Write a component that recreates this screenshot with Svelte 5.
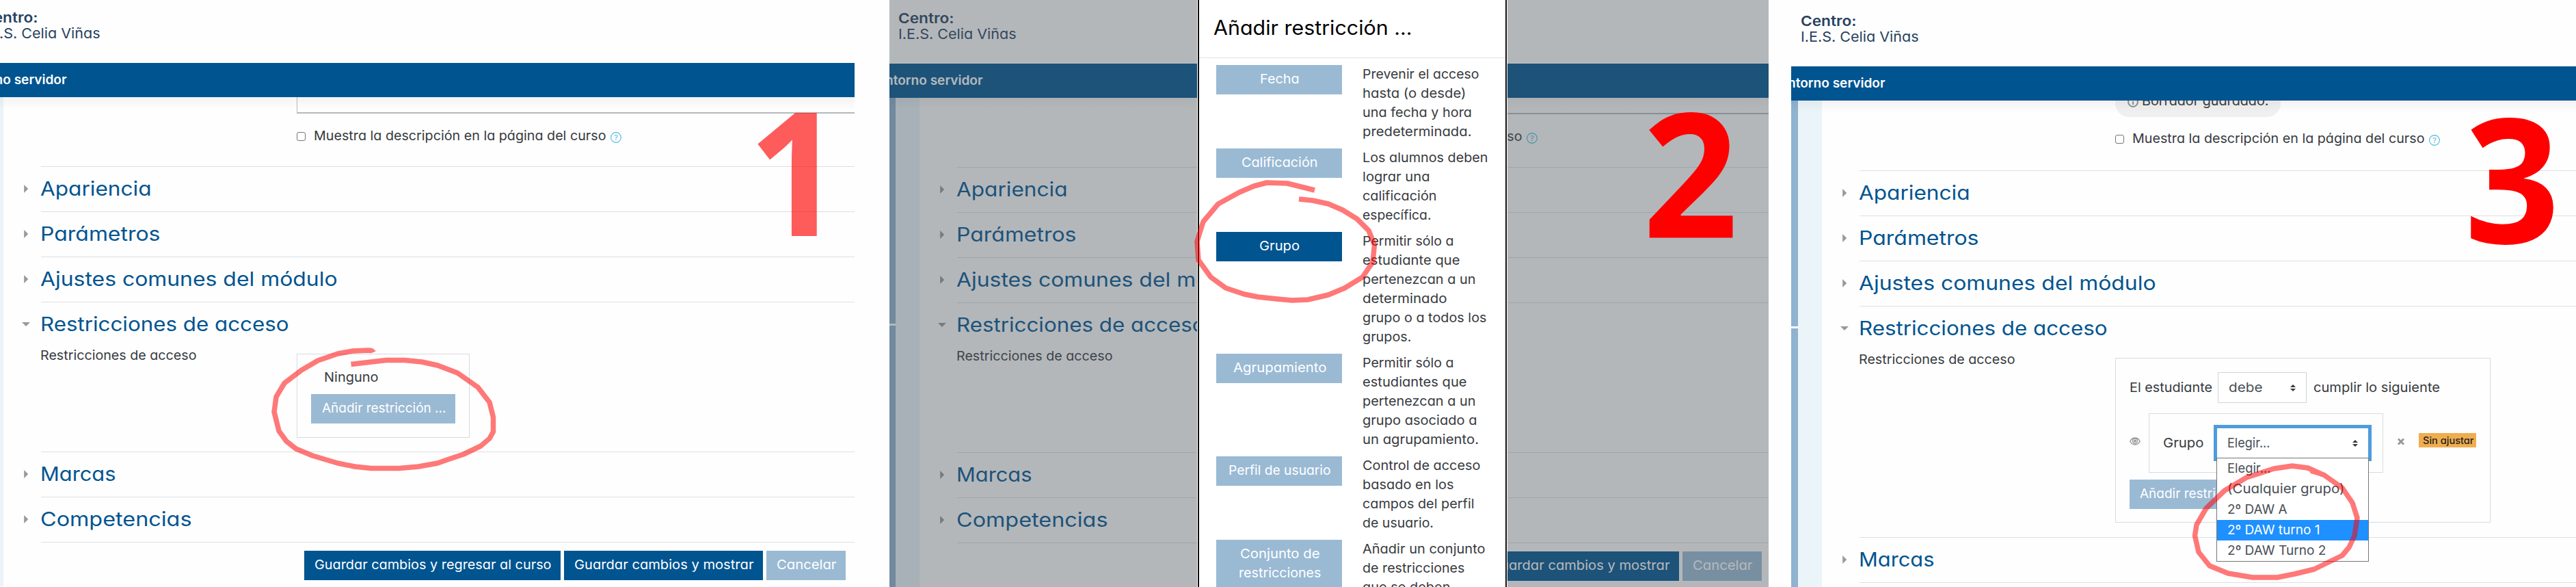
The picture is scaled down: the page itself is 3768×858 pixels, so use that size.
<script>
  const sections = {
    before: [
      ['Apariencia', 161],
      ['Parámetros', 174],
      ['Ajustes comunes del módulo', 433]
    ],
    after: [
      ['Marcas', 109],
      ['Competencias', 220]
    ]
  };

  const restrictions = [
    { name: [['Fecha', 56]], text: [['Prevenir el acceso', 169], ['hasta (o desde)', 150], ['una fecha y hora', 158.5], ['predeterminada.', 158]] },
    { name: [['Calificación', 110]], text: [['Los alumnos deben', 182], ['lograr una', 97], ['calificación', 107], ['específica.', 99]] },
    { name: [['Grupo', 57.5]], active: true, text: [['Permitir sólo a', 132], ['estudiante que', 141], ['pertenezcan a un', 164], ['determinado', 122], ['grupo o a todos los', 180], ['grupos.', 70]] },
    { name: [['Agrupamiento', 135]], text: [['Permitir sólo a', 132], ['estudiantes que', 151], ['pertenezcan a un', 164], ['grupo asociado a', 166], ['un agrupamiento.', 168.5]] },
    { name: [['Perfil de usuario', 148]], text: [['Control de acceso', 171], ['basado en los', 132], ['campos del perfil', 162], ['de usuario.', 102.5]] },
    { name: [['Conjunto de', 115], ['restricciones', 119]], text: [['Añadir un conjunto', 178], ['de restricciones', 148], ['que se deben', 127]] }
  ];

  const options = [
    ['Elegir...', 62],
    ['(Cualquier grupo)', 170],
    ['2º DAW A', 86],
    ['2º DAW turno 1', 134],
    ['2º DAW Turno 2', 143]
  ];

  // Widens a label's letters so that it occupies the given width.
  function fit(node, width) {
    const natural = node.getBoundingClientRect().width;
    node.style.width = `${width}px`;
    node.style.transform = `scaleX(${((width + 1.5) / natural).toFixed(4)})`;
  }
</script>

{#snippet label(text, width)}<span class="t" use:fit={width}>{text}</span>{/snippet}

{#snippet section(title, width)}
  <section class="section">
    <svg class="caret" viewBox="0 0 12 12"><path d="M3.2 0 9.2 6 3.2 12z" /></svg>
    <div class="body"><h2>{@render label(title, width)}</h2></div>
  </section>
{/snippet}

{#snippet arrows()}
  <svg class="arrows" viewBox="0 0 8 10"><path d="M0 4 4 0 8 4zM0 6 4 10 8 6z" /></svg>
{/snippet}

{#snippet page(kind)}
  <div class="page {kind}">
    <header>
      <strong>{@render label('Centro:', 80)}</strong>
      <div>{@render label('I.E.S. Celia Viñas', 171)}</div>
    </header>
    <nav><div>{@render label('ntorno servidor', 141)}</div></nav>
    <div class="columns">
      <div class="rail"><i></i><i></i></div>
      <div class="pale"></div>
      <main>
        <div class="top">
          {#if kind === 'group'}
            <div class="draft">
              <svg viewBox="0 0 16 16"><circle cx="8" cy="8" r="6.9" /><path d="M8 7v5M8 4v1.6" /></svg>
              {@render label('Borrador guardado.', 184)}
            </div>
          {:else}
            <div class="editor"></div>
          {/if}
          <div class="check">
            <i class="box"></i>
            {@render label('Muestra la descripción en la página del curso', 426)}
            <svg class="help" viewBox="0 0 16 16"><circle cx="8" cy="8" r="7.4" /><text x="8" y="12">?</text></svg>
          </div>
        </div>
        {#each sections.before as [title, width]}{@render section(title, width)}{/each}
        <section class="section open">
          <svg class="caret" viewBox="0 0 12 12"><path d="M0 3h12L6 9z" /></svg>
          <div class="body">
            <h2>{@render label('Restricciones de acceso', 362)}</h2>
            <div class="field">
              <div class="name">{@render label('Restricciones de acceso', 227)}</div>
              {#if kind === 'group'}
                <div class="rules">
                  <div class="sentence">
                    {@render label('El estudiante', 119.5)}
                    <div class="select">{@render label('debe', 48)}{@render arrows()}</div>
                    {@render label('cumplir lo siguiente', 183.5)}
                  </div>
                  <div class="rule">
                    <svg class="eye" viewBox="0 0 16 12"><path d="M.8 6C2.5 2.7 5 1 8 1s5.500 1.700 7.200 5C13.500 9.300 11 11 8 11S2.500 9.300.8 6z" /><circle cx="8" cy="5.500" r="3.500" /><circle class="pupil" cx="8" cy="5.500" r="1.900" /></svg>
                    <div class="condition">
                      {@render label('Grupo', 58)}
                      <div class="select focus">
                        {@render label('Elegir...', 61)}{@render arrows()}
                        <div class="menu">
                          {#each options as [text, width], i}
                            <div class:chosen={i === 3}>{@render label(text, width)}</div>
                          {/each}
                        </div>
                      </div>
                    </div>
                    <svg class="cross" viewBox="0 0 12 11"><path d="M2 1.500 10 9.500M10 1.500 2 9.500" /></svg>
                    <span class="badge">{@render label('Sin ajustar', 73)}</span>
                  </div>
                  <div class="btn light">{@render label('Añadir restricción ...', 180)}</div>
                </div>
              {:else}
                <div class="rules">
                  <div class="none">{@render label('Ninguno', 78)}</div>
                  <div class="btn light">{@render label('Añadir restricción ...', 180)}</div>
                </div>
              {/if}
            </div>
          </div>
        </section>
        {#each sections.after as [title, width]}{@render section(title, width)}{/each}
        <div class="actions">
          <div class="btn">{@render label('Guardar cambios y regresar al curso', 345)}</div>
          <div class="btn">{@render label('Guardar cambios y mostrar', 261)}</div>
          <div class="btn light">{@render label('Cancelar', 86)}</div>
        </div>
      </main>
    </div>
  </div>
{/snippet}

<div class="steps">
  <div class="step first">
    {@render page('empty')}
    <div class="clip"><span class="digit">1</span></div>
  </div>
  <div class="step second">
    {@render page('dimmed')}
    <div class="shade"></div>
    <div class="modal">
      <div class="title">{@render label('Añadir restricción ...', 289)}</div>
      <div class="list">
        {#each restrictions as item}
          <div class="item">
            <div class="btn" class:light={!item.active}>
              {#each item.name as [text, width]}<div>{@render label(text, width)}</div>{/each}
            </div>
            <div class="desc">
              {#each item.text as [text, width]}<div>{@render label(text, width)}</div>{/each}
            </div>
          </div>
        {/each}
      </div>
    </div>
    <span class="digit">2</span>
  </div>
  <div class="step third">
    {@render page('group')}
    <span class="digit">3</span>
  </div>
  <svg class="marks" viewBox="0 0 3768 858">
    <path d="M546 515Q545 512 539 512L516 513 494 517 465 527 441 541 416 560 404 580 401 602 408 630 419 645 433 656 457 666 494 677 519 682 543 684.500 584 684.500 612 682 640 677 657 671 678 664 703 652 716 641 721.500 631 721.500 610 716 588 699 566 669 545 640 534 617 529 592 526.500 565 526.500 543 529 513.500 532.500" />
    <path d="M1923 278 1907 274 1883 268 1853 267 1834 272 1813 281 1782 298 1760 324 1751 353 1753 380 1771 405 1793 421 1820 430 1840 434 1868 437 1890 439 1913 438 1943 431 1967 421 1993 405 2008 383 2010.500 358 2002 337 1985 320 1964 307 1943 298 1920 293 1900 291" />
    <path d="M3398 694 3376 684 3353 681 3326 685 3286 698 3254 717 3227 743 3213 767 3210.500 783 3216 807 3232 827 3259 838 3295 844 3331 844 3356 839 3385 832 3426 812 3436 800 3444 783 3448 757 3441 735 3426 713 3399 694 3380 688" />
  </svg>
</div>

<style>
  :global(body) { margin: 0; background: #fefefe; }
  .steps {
    position: relative; display: flex; width: 3768px; height: 858px; overflow: hidden;
    background: #fefefe; color: #373b40;
    font: 19px/28px Inter, "Open Sans", sans-serif;
    font-feature-settings: "cv11";
  }
  .t { display: inline-block; white-space: pre; flex: none; text-align: left; transform-origin: 0 50%; }
  .step { position: relative; flex: none; height: 858px; overflow: hidden; }
  .first { width: 1250px; margin-right: 51px; }
  .second { width: 1286px; margin-right: 33px; }
  .third { width: 1148px; }
  .page { box-sizing: border-box; }
  .empty { width: 1290px; margin-left: -40px; }
  .dimmed { width: 1287px; margin-left: -1px; padding-top: 1px; }
  .group { width: 1148px; padding-top: 5px; }

  header { box-sizing: border-box; height: 92px; padding: 14px 0 0 14px; color: #27415f; font-size: 20.500px; line-height: 23px; }
  header strong { display: block; font-weight: 600; }
  nav { height: 50px; background: #005490; color: #fff; overflow: hidden; font-weight: 600; line-height: 49px; }
  nav div { display: flex; justify-content: flex-end; width: 136px; }
  .columns { position: relative; display: flex; height: 715px; }
  .columns::before { content: ""; position: absolute; inset: 0 0 auto; height: 18px; background: linear-gradient(rgba(0, 0, 0, .045), rgba(0, 0, 0, 0)); }
  .rail { display: flex; flex-direction: column; gap: 3px; width: 9.500px; flex: none; }
  .rail i { background: #8fb2d0; height: 330px; }
  .rail i + i { flex: 1; }
  .pale { width: 35px; flex: none; background: #ebf4f8; }
  main { flex: 1; padding-left: 27.500px; min-width: 0; }
  .top { display: flow-root; height: 101px; padding-left: 402px; }
  .group .top { height: 102px; }
  .editor { height: 22px; border: solid #b5babd; border-width: 0 0 2px 1.500px; }
  .check { display: flex; align-items: center; margin-top: 19px; }
  .group .check { margin-top: 18px; }
  .box { box-sizing: border-box; width: 13px; height: 13px; flex: none; border: 1px solid #767676; border-radius: 3px; margin: 1px 11.500px 0 0; background: #fff; }
  .help { width: 16px; height: 16px; flex: none; margin: 3px 0 0 8px; }
  .help circle { fill: none; stroke: #4bb8e0; stroke-width: 1.100; }
  .help text { fill: #4bb8e0; font-size: 11px; text-anchor: middle; }
  .draft { box-sizing: border-box; display: flex; gap: 5px; width: 242px; height: 24px; padding-left: 18px; border-radius: 0 0 20px 20px; background: #f0f0f0; overflow: hidden; line-height: 1px; }
  .draft svg { width: 16px; height: 16px; margin-top: -6px; flex: none; }
  .draft circle, .draft path { fill: none; stroke: #8d9093; stroke-width: 2; }

  .section { display: grid; grid-template-columns: 28px 1fr; height: 66px; }
  .section.open { height: 219px; }
  .group .section.open { height: 338px; }
  .caret { width: 12px; height: 12px; margin-top: 27px; fill: #999; }
  .body { border-top: 1px solid #dcdfe2; }
  h2 { margin: 0 0 0 -1px; font-size: 28.800px; line-height: 64px; height: 64px; font-weight: 400; color: #005490; }
  .field { display: grid; grid-template-columns: 374px auto 1fr; }
  .name { margin-left: -1px; }
  .rules { box-sizing: border-box; width: 253px; height: 123px; margin-top: 11px; padding: 20px 20px 0; border: 1px solid #d6dcdf; }
  .none { padding-left: 19px; margin-bottom: 10px; }
  .btn { box-sizing: border-box; width: max-content; height: 43px; padding: 7px 15.500px 8px; background: #005490; color: #fff; text-align: center; }
  .light { background: #9abad4; }
  .actions { display: flex; gap: 5px; border-top: 1px solid #dcdfe2; margin-left: 28px; padding: 12px 0 0 385px; }
  .actions .btn { padding: 7px 15px 8px; }
  .group .actions { display: none; }

  .group .rules { width: 549px; height: 241px; padding: 20px 19.500px 0; }
  .sentence { display: flex; align-items: center; gap: 10.300px; height: 45px; }
  .select { box-sizing: border-box; position: relative; display: flex; align-items: center; justify-content: space-between; width: 129.500px; height: 45px; padding: 0 15px; border: 1px solid #cdd5db; color: #495057; background: #fff; }
  .arrows { width: 8px; height: 10px; fill: #343a40; }
  .rule { display: flex; align-items: center; margin: 15px 0 10px; }
  .eye { width: 16px; height: 12px; margin: -5px 12px 0 0; fill: none; stroke: #999; stroke-width: 1.500; }
  .eye .pupil { fill: #999; stroke: none; }
  .condition { box-sizing: border-box; display: flex; align-items: center; gap: 16px; width: 343.500px; height: 87px; padding-left: 20px; border: 1px solid #d6dcdf; }
  .focus { width: 231px; height: 53px; border: 5px solid #4f9bdc; }
  .cross { width: 12px; height: 11px; margin: -5px 20px 0; fill: none; stroke: #999; stroke-width: 3; }
  .badge { height: 21px; margin-top: -9px; padding: 0 5.500px; background: #f0ad4e; color: #222; font-size: 14.200px; font-weight: 500; line-height: 21px; }
  .menu { position: absolute; z-index: 2; left: -1px; top: 43px; width: 221px; border: 1px solid #767676; background: #fff; line-height: 30px; }
  .menu div { padding-left: 15.500px; height: 30px; }
  .menu .chosen { background: #1e90ff; color: #fff; }

  .shade { position: absolute; inset: 0; background: rgba(71, 81, 88, .408); }
  .modal { position: absolute; left: 450px; top: 0; width: 452px; height: 858px; border: solid #fff; border-width: 0 1px; background: #fff; box-shadow: inset 2px 0 #111, inset -2px 0 #111; overflow: hidden; }
  .title { height: 84px; margin: 0 2px; padding-left: 21px; border-bottom: 1px solid #dee2e6; color: #000; font-size: 29.200px; line-height: 81px; }
  .list { display: flex; flex-direction: column; gap: 10px; padding: 10px 0 0 27px; }
  .item { display: flex; gap: 29.500px; }
  .item .btn { width: 184px; height: max-content; padding: 7px 0 8px; flex: none; }
  .digit { position: absolute; font: 700 254px/254px "Open Sans", sans-serif; color: #f00; transform: scaleX(.96); transform-origin: 0 50%; }
  .clip { position: absolute; left: 1050px; top: 165px; width: 200px; height: 200px; overflow: hidden; opacity: .64; }
  .clip .digit { left: 44px; top: -45px; }
  .second .digit { left: 1102px; top: 123px; }
  .third .digit { left: 985px; top: 131px; }
  .marks { position: absolute; z-index: 5; inset: 0; width: 3768px; height: 858px; fill: none; stroke: rgb(255, 0, 0); stroke-opacity: .53; stroke-width: 7.500; stroke-linejoin: round; }
</style>
